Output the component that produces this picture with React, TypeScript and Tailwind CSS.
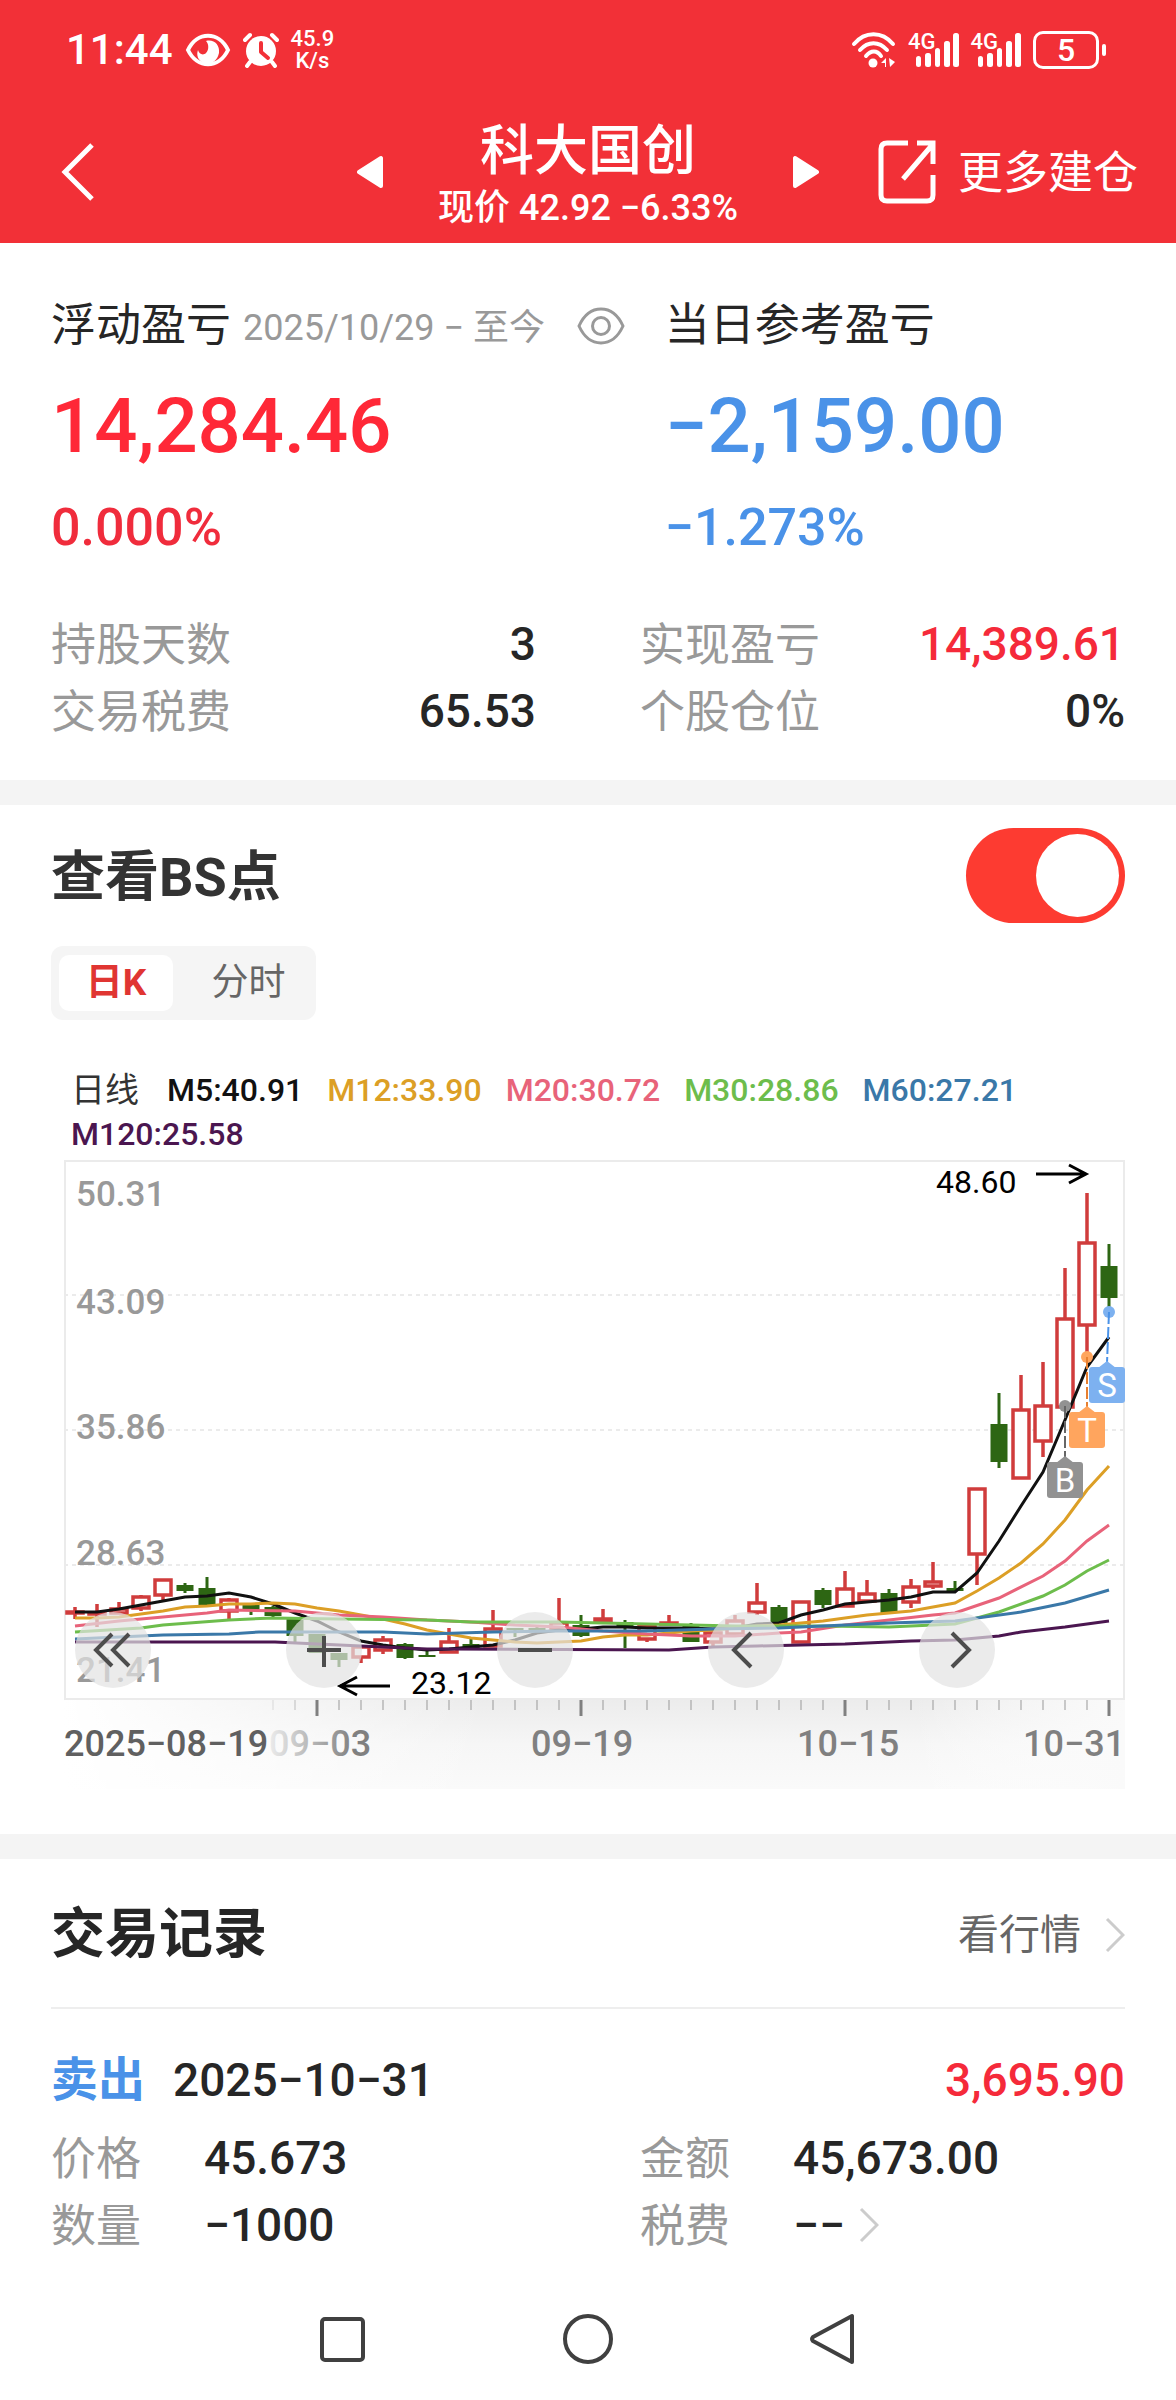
import { useState } from "react";

// [body top, body bottom, wick top, wick bottom, is rising]
type Candle = [number, number, number, number, boolean];

const candles: Candle[] = [
  [451, 454, 447, 459, true],
  [452, 455, 444, 467, true],
  [448, 454, 442, 454, true],
  [436, 449, 435, 451, true],
  [419, 436, 419, 440, true],
  [425, 431, 423, 433, false],
  [428, 445, 417, 445, false],
  [439, 452, 438, 459, true],
  [443, 450, 443, 455, false],
  [447, 456, 446, 457, false],
  [457, 476, 457, 482, false],
  [474, 493, 474, 493, false],
  [493, 500, 493, 507, false],
  [486, 498, 486, 503, true],
  [479, 491, 476, 494, true],
  [484, 498, 483, 499, false],
  [495, 497, 491, 497, false],
  [481, 493, 468, 493, true],
  [484, 488, 479, 488, false],
  [468, 487, 450, 487, true],
  [468, 470, 468, 477, false],
  [468, 471, 466, 471, false],
  [462, 469, 438, 469, true],
  [465, 476, 455, 477, false],
  [458, 462, 449, 462, true],
  [462, 468, 460, 488, false],
  [465, 480, 465, 482, true],
  [462, 465, 455, 465, true],
  [465, 482, 463, 482, false],
  [472, 483, 472, 486, true],
  [460, 475, 455, 477, true],
  [442, 453, 423, 455, true],
  [447, 463, 445, 463, false],
  [441, 483, 441, 483, true],
  [430, 445, 428, 448, false],
  [428, 447, 411, 447, true],
  [433, 442, 420, 442, true],
  [433, 453, 429, 453, false],
  [426, 443, 419, 448, true],
  [421, 427, 402, 429, true],
  [428, 431, 421, 431, false],
  [328, 395, 328, 425, true],
  [264, 302, 233, 308, false],
  [249, 319, 215, 319, true],
  [245, 282, 202, 297, true],
  [158, 248, 108, 248, true],
  [82, 166, 33, 197, true],
  [106, 138, 84, 151, false],
];

const averages = [
  {
    color: "#111111",
    points:
      "11,452 33,452 55,449 77,445 99,441 121,437 143,436 165,433 187,437 209,444 231,453 253,461 275,472 297,481 319,485 341,488 363,490 385,489 407,487 429,485 451,480 473,473 495,470 517,469 539,467 561,467 583,468 605,468 627,468 649,469 671,468 693,464 715,463 737,455 759,450 781,444 803,442 825,440 847,437 869,432 891,432 913,413 935,381 957,346 979,312 1001,260 1023,207 1045,177",
  },
  {
    color: "#dc9f26",
    points:
      "11,458 33,458 55,457 77,454 99,451 121,447 143,446 165,444 187,444 209,443 231,444 253,448 275,451 297,455 319,459 341,464 363,470 385,474 407,478 429,480 451,482 473,483 495,482 517,481 539,477 561,475 583,475 605,473 627,471 649,470 671,468 693,466 715,465 737,463 759,461 781,458 803,455 825,453 847,451 869,447 891,443 913,431 935,418 957,403 979,384 1001,360 1023,330 1045,306",
  },
  {
    color: "#e8637a",
    points:
      "11,466 55,461 99,457 143,453 165,450 231,451 275,455 319,457 363,460 407,462 451,465 495,467 539,471 583,474 627,476 671,476 715,473 737,472 781,465 825,460 869,455 891,453 935,438 979,416 1001,401 1023,381 1045,365",
  },
  {
    color: "#6dbd4c",
    points:
      "11,472 77,468 99,465 165,460 209,458 275,459 363,460 407,462 495,462 539,463 583,464 671,466 715,466 759,466 825,467 891,464 935,452 979,436 1001,425 1023,411 1045,400",
  },
  {
    color: "#3a78a8",
    points:
      "11,479 99,475 165,474 195,472 319,472 363,474 429,472 495,471 583,471 649,469 715,468 781,465 825,463 891,461 957,452 1001,443 1045,430",
  },
  {
    color: "#4b1650",
    points:
      "11,482 211,482 297,486 363,489 385,489 605,490 649,487 693,486 737,485 781,484 847,481 891,480 935,476 957,472 1001,467 1023,464 1045,461",
  },
];

const legend = [
  { text: "M5:40.91", color: "text-[#111111]" },
  { text: "M12:33.90", color: "text-[#dc9f26]" },
  { text: "M20:30.72", color: "text-[#e8637a]" },
  { text: "M30:28.86", color: "text-[#6dbd4c]" },
  { text: "M60:27.21", color: "text-[#3a78a8]" },
  { text: "M120:25.58", color: "text-[#4b1650]" },
];

const priceLabels = [
  { text: "50.31", y: 46 },
  { text: "43.09", y: 154 },
  { text: "35.86", y: 279 },
  { text: "28.63", y: 405 },
  { text: "21.41", y: 522 },
];

const dateLabels = [
  { text: "2025−08−19", x: 0, fill: "#606060" },
  { text: "09−03", x: 205, fill: "url(#labelFade)" },
  { text: "09−19", x: 467, fill: "#808080" },
  { text: "10−15", x: 733, fill: "#808080" },
  { text: "10−31", x: 959, fill: "#808080" },
];

const markers = [
  { letter: "B", color: "#929292", line: "#666666", x: 1001, dot: 246, box: 302, boxX: 1001 },
  { letter: "T", color: "#ffa55e", line: "#e88030", x: 1023, dot: 197, box: 252, boxX: 1023 },
  { letter: "S", color: "#7db1f0", line: "#4a92e8", x: 1045, dot: 152, box: 207, boxX: 1043 },
];

const chartButtons = [
  { label: "最早", path: "M37 22 L21 38 L37 54 M54 22 L38 38 L54 54" },
  { label: "放大", path: "M21 38 H55 M38 24 V55" },
  { label: "缩小", path: "M21 38 H55" },
  { label: "向左", path: "M43 21 L26 38 L43 55" },
  { label: "向右", path: "M33 21 L50 38 L33 55" },
];

function Signal() {
  return (
    <div className="flex items-end">
      <span className="self-start text-[22px] leading-[18px] font-medium">4G</span>
      <svg width="44" height="34" viewBox="0 0 44 34" className="-ml-5" fill="white">
        <rect x="0" y="23" width="5" height="11" rx="2.5" />
        <rect x="9" y="20" width="6" height="14" rx="2.5" />
        <rect x="19" y="15" width="5" height="19" rx="2.5" />
        <rect x="28" y="8" width="6" height="26" rx="2.5" />
        <rect x="37" y="0" width="6" height="34" rx="2.5" />
      </svg>
    </div>
  );
}

function StatusBar() {
  return (
    <div className="flex h-[100px] items-center justify-between pr-[70px] pl-[66px]">
      <div className="flex items-center gap-3">
        <span className="text-[42px] leading-[48px] font-medium">11:44</span>
        <svg width="46" height="36" viewBox="0 0 46 36" fill="none">
          <path d="M3 18 C12 -1 34 -1 43 18 C34 37 12 37 3 18 Z" stroke="white" strokeWidth="4" />
          <path d="M21 9 C29 7 35 13 34 21 C32 30 25 33 19 31 C13 29 11 23 13 18 C14 22 18 24 21 21 C24 18 24 12 21 9 Z" fill="white" />
        </svg>
        <svg width="36" height="36" viewBox="0 0 36 36" fill="none">
          <circle cx="18" cy="19" r="15" fill="white" />
          <path d="M2 8 L7 3 M34 8 L29 3" stroke="white" strokeWidth="4" strokeLinecap="round" />
          <path d="M7 30 L4 34 M29 30 L32 34" stroke="white" strokeWidth="4" strokeLinecap="round" />
          <path d="M18 11 V20 L25 26" stroke="#f23037" strokeWidth="4" strokeLinecap="round" strokeLinejoin="round" />
        </svg>
        <div className="text-center text-[22px] leading-[22px] font-medium">
          <div>45.9</div>
          <div>K/s</div>
        </div>
      </div>

      <div className="flex items-center gap-[11px]">
        <svg width="46" height="36" viewBox="0 0 46 36" fill="none" stroke="white" strokeWidth="4" strokeLinecap="round">
          <path d="M3 12 C14 -1 31 -1 42 12" />
          <path d="M9 18 C17 9 28 9 36 18" />
          <path d="M15 24 C20 18 26 18 30 24" />
          <circle cx="22" cy="31" r="4.5" fill="white" stroke="none" />
          <path d="M30 31 L35 26 V35 H34 V31 Z M38 26 L44 30 L39 35 Z" fill="white" stroke="none" />
        </svg>
        <Signal />
        <Signal />
        <div className="flex items-center gap-[3px]">
          <div className="flex h-[38px] w-[66px] items-center justify-center rounded-[10px] border-3 border-white text-[32px] leading-[32px] font-medium">
            5
          </div>
          <div className="h-3 w-1 rounded bg-white" />
        </div>
      </div>
    </div>
  );
}

function TitleBar() {
  return (
    <div className="grid h-[143px] grid-cols-[1fr_auto_1fr] items-center px-[38px]">
      <button aria-label="返回" className="ml-5 justify-self-start">
        <svg width="38" height="64" viewBox="0 0 38 64" fill="none" stroke="white" strokeWidth="5">
          <path d="M34 5 L7 32 L34 59" />
        </svg>
      </button>

      <div className="flex items-center gap-[55px]">
        <button aria-label="上一只">
          <svg width="26" height="36" viewBox="0 0 26 36" fill="white" stroke="white" strokeWidth="4" strokeLinejoin="round">
            <path d="M24 4 V32 L2 18 Z" />
          </svg>
        </button>
        <div className="pt-3 text-center">
          <h1 className="text-[54px] leading-[60px] font-medium">科大国创</h1>
          <p className="text-[36px] leading-[52px] font-medium">现价 42.92 −6.33%</p>
        </div>
        <button aria-label="下一只">
          <svg width="26" height="36" viewBox="0 0 26 36" fill="white" stroke="white" strokeWidth="4" strokeLinejoin="round">
            <path d="M2 4 V32 L24 18 Z" />
          </svg>
        </button>
      </div>

      <button className="flex items-center gap-[22px] justify-self-end text-[45px] leading-[60px]">
        <svg width="58" height="66" viewBox="0 0 58 66" fill="none" stroke="white" strokeWidth="5">
          <path d="M30 4 H9 Q3 4 3 10 V56 Q3 62 9 62 H49 Q55 62 55 56 V36" />
          <path d="M39 4 H55 V25 M55 5 L25 40" />
        </svg>
        <span className="pt-1">更多建仓</span>
      </button>
    </div>
  );
}

function Stat({ label, value, color }: { label: string; value: string; color: string }) {
  return (
    <div className="flex h-[67px] items-center justify-between leading-[60px]">
      <dt className="text-[45px] text-[#999999]">{label}</dt>
      <dd className={`pb-1 text-[46px] font-medium ${color}`}>{value}</dd>
    </div>
  );
}

function Summary() {
  return (
    <section className="px-[51px] pt-[51px] pb-[34px]">
      <div className="grid grid-cols-[4fr_3fr]">
        <div>
          <div className="flex items-center text-[#262626]">
            <h2 className="text-[45px] leading-[64px]">浮动盈亏</h2>
            <span className="ml-3 pt-1 text-[36px] leading-[60px] text-[#999999]">2025/10/29 − 至今</span>
            <button aria-label="隐藏金额" className="ml-8">
              <svg width="48" height="38" viewBox="0 0 48 38" fill="none" stroke="#999999" strokeWidth="3">
                <path d="M2 19 C7 8 15 2 24 2 C33 2 41 8 46 19 C41 30 33 36 24 36 C15 36 7 30 2 19 Z" />
                <circle cx="24" cy="19" r="8.5" />
              </svg>
            </button>
          </div>
          <p className="mt-5 text-[76px] leading-[96px] font-medium text-[#ff2837]">14,284.46</p>
          <p className="mt-[14px] text-[52px] leading-[80px] font-medium text-[#f02c3c]">0.000%</p>
        </div>
        <div>
          <h2 className="text-[45px] leading-[64px] text-[#262626]">当日参考盈亏</h2>
          <p className="mt-5 text-[76px] leading-[96px] font-medium text-[#4a92e8]">−2,159.00</p>
          <p className="mt-[14px] text-[52px] leading-[80px] font-medium text-[#4a92e8]">−1.273%</p>
        </div>
      </div>

      <dl className="mt-11 grid grid-cols-2 gap-x-[104px]">
        <Stat label="持股天数" value="3" color="text-[#262626]" />
        <Stat label="实现盈亏" value="14,389.61" color="text-[#f52a3a]" />
        <Stat label="交易税费" value="65.53" color="text-[#262626]" />
        <Stat label="个股仓位" value="0%" color="text-[#262626]" />
      </dl>
    </section>
  );
}

function Chart() {
  return (
    <div className="relative pl-[13px]">
      <svg viewBox="0 0 1061 630" className="block w-full" fontFamily="Roboto, sans-serif">
        <defs>
          <linearGradient id="axisShade" x1="0" y1="0" x2="0" y2="1">
            <stop offset="0" stopColor="#ececec" />
            <stop offset="0.5" stopColor="#f6f6f6" />
            <stop offset="1" stopColor="#fafafa" />
          </linearGradient>
          <linearGradient id="axisFade" x1="0" y1="0" x2="1" y2="0">
            <stop offset="0" stopColor="white" />
            <stop offset="0.4" stopColor="white" stopOpacity="0" />
            <stop offset="0.8" stopColor="white" stopOpacity="0" />
            <stop offset="1" stopColor="#fafafa" stopOpacity="1" />
          </linearGradient>
          <linearGradient id="labelFade" gradientUnits="userSpaceOnUse" x1="200" y1="0" x2="290" y2="0">
            <stop offset="0" stopColor="#f2f2f2" />
            <stop offset="1" stopColor="#808080" />
          </linearGradient>
        </defs>

        <rect x="1" y="1" width="1059" height="538" fill="none" stroke="#ebebeb" strokeWidth="2" />
        {[135, 270, 405].map((y) => (
          <line key={y} x1="0" x2="1061" y1={y} y2={y} stroke="#ebebeb" strokeWidth="2" strokeDasharray="4 4" />
        ))}
        {priceLabels.map((label) => (
          <text key={label.text} x="12" y={label.y} fontSize="35" fontWeight="500" fill="#999999">
            {label.text}
          </text>
        ))}

        {/* date axis */}
        <rect x="0" y="540" width="1061" height="89" fill="url(#axisShade)" />
        <rect x="0" y="540" width="1061" height="89" fill="url(#axisFade)" />
        {Array.from({ length: 39 }, (_, i) => {
          const major = i % 12 === 2;
          return (
            <line
              key={i}
              x1={209 + i * 22}
              x2={209 + i * 22}
              y1="540"
              y2={major ? 556 : 550}
              stroke={major ? "#808080" : "#999999"}
              strokeWidth={major ? 3 : 1}
              opacity={i < 2 ? 0.3 + i * 0.3 : 1}
            />
          );
        })}
        {dateLabels.map((label) => (
          <text key={label.text} x={label.x} y="596" fontSize="36" fontWeight="500" fill={label.fill}>
            {label.text}
          </text>
        ))}

        {candles.map(([top, bottom, high, low, rising], i) => {
          const x = 11 + i * 22;
          if (!rising) {
            return (
              <g key={i} fill="#2d6613">
                <rect x={x - 1.5} y={high} width="3" height={low - high} />
                <rect x={x - 8.5} y={top} width="17" height={bottom - top} />
              </g>
            );
          }
          return (
            <g key={i} stroke="#d03c3c" strokeWidth="3.5">
              <path d={`M${x} ${high} V${top} M${x} ${bottom} V${low}`} />
              <rect
                x={x - 8}
                y={top + 1}
                width="16"
                height={Math.max(bottom - top - 2, 1)}
                fill="white"
              />
            </g>
          );
        })}

        {averages.map((line) => (
          <polyline key={line.color} points={line.points} fill="none" stroke={line.color} strokeWidth="3" />
        ))}

        {markers.map((m) => (
          <g key={m.letter}>
            <circle cx={m.x} cy={m.dot} r="6" fill={m.color} />
            <line x1={m.x} y1={m.dot} x2={m.boxX} y2={m.box - 4} stroke={m.line} strokeWidth="2" strokeDasharray="12 3" />
            <path d={`M${m.boxX - 9} ${m.box + 1} L${m.boxX} ${m.box - 6} L${m.boxX + 9} ${m.box + 1} Z`} fill={m.color} />
            <rect x={m.boxX - 18} y={m.box} width="36" height="36" rx="3" fill={m.color} />
            <text x={m.boxX} y={m.box + 30} fontSize="33" fill="white" textAnchor="middle">
              {m.letter}
            </text>
          </g>
        ))}

        <g stroke="black" strokeWidth="3" fill="none">
          <path d="M972 14 H1022 M1005 5 L1022 14 L1005 23" />
          <path d="M326 526 H276 M293 517 L276 526 L293 535" />
        </g>
        <text x="872" y="33" fontSize="32" fill="black">
          48.60
        </text>
        <text x="347" y="534" fontSize="32" fill="black">
          23.12
        </text>
      </svg>

      {/* zoom and pan buttons float over the candles */}
      <div className="absolute inset-x-0 top-[452px] flex justify-between pr-[130px] pl-6">
        {chartButtons.map((button) => (
          <button key={button.label} aria-label={button.label} className="size-19 rounded-full bg-[#e2e2e2]/70">
            <svg viewBox="0 0 76 76" fill="none" stroke="#4d4d4d" strokeWidth="4">
              <path d={button.path} />
            </svg>
          </button>
        ))}
      </div>
    </div>
  );
}

function BsPoints() {
  const [enabled, setEnabled] = useState(true);
  const [tab, setTab] = useState("day");

  return (
    <section className="px-[51px] pt-[23px] pb-11">
      <div className="flex items-center justify-between">
        <h2 id="bs-title" className="pt-1 text-[54px] leading-[90px] font-bold text-[#333333]">
          查看BS点
        </h2>
        <button
          role="switch"
          aria-checked={enabled}
          aria-labelledby="bs-title"
          onClick={() => setEnabled(!enabled)}
          className={`flex h-[95px] w-[159px] items-center rounded-full px-[6px] ${
            enabled ? "justify-end bg-[#fd3b31]" : "justify-start bg-gray-300"
          }`}
        >
          <span className="size-[83px] rounded-full bg-white" />
        </button>
      </div>

      <div className="mt-[23px] flex w-fit rounded-xl bg-[#f5f5f5] px-2 py-[9px] text-[37px] leading-[56px]">
        <button
          onClick={() => setTab("day")}
          className={`w-[114px] rounded-[10px] ${tab === "day" ? "bg-white font-bold text-[#e03532]" : "text-[#666666]"}`}
        >
          日K
        </button>
        <button
          onClick={() => setTab("minute")}
          className={`ml-4 w-[119px] rounded-[10px] ${tab === "minute" ? "bg-white font-bold text-[#e03532]" : "text-[#666666]"}`}
        >
          分时
        </button>
      </div>

      <div className="mt-12 mb-1 flex flex-wrap gap-x-6 pr-16 pl-5 text-[32px] leading-[44px] font-medium">
        <span className="pr-1 text-[34px] font-normal text-[#333333]">日线</span>
        {legend.map((item) => (
          <span key={item.text} className={item.color}>
            {item.text}
          </span>
        ))}
      </div>
      <Chart />
    </section>
  );
}

function Chevron() {
  return (
    <svg width="20" height="36" viewBox="0 0 20 36" fill="none" stroke="#cccccc" strokeWidth="3">
      <path d="M2 2 L18 18 L2 34" />
    </svg>
  );
}

function Detail({ label, value, arrow }: { label: string; value: string; arrow?: boolean }) {
  return (
    <div className="flex h-[67px] items-center leading-[60px]">
      <dt className="w-[153px] text-[45px] text-[#999999]">{label}</dt>
      <dd className="flex items-center gap-[14px] pb-1 text-[46px] font-medium text-[#262626]">
        {value}
        {arrow && <Chevron />}
      </dd>
    </div>
  );
}

function Records() {
  return (
    <section className="px-[51px] pt-10">
      <div className="flex items-center justify-between border-b-2 border-[#eeeeee] pb-9">
        <h2 className="text-[54px] leading-[72px] font-bold text-[#262626]">交易记录</h2>
        <a href="#quote" className="flex items-center gap-6 text-[41px] leading-[72px] text-[#666666]">
          看行情
          <Chevron />
        </a>
      </div>

      <div className="flex items-center pt-[33px] text-[46px] leading-[76px] font-medium">
        <span className="text-[47px] font-bold text-[#4a92e8]">卖出</span>
        <span className="ml-7 text-[#262626]">2025−10−31</span>
        <span className="ml-auto text-[#f52a3a]">3,695.90</span>
      </div>
      <dl className="mt-2 grid grid-cols-2 gap-x-[104px]">
        <Detail label="价格" value="45.673" />
        <Detail label="金额" value="45,673.00" />
        <Detail label="数量" value="−1000" />
        <Detail label="税费" value="−−" arrow />
      </dl>
    </section>
  );
}

function SystemNav() {
  return (
    <nav className="mt-[51px] flex justify-center gap-[190px] pb-6">
      <button aria-label="最近任务">
        <svg width="56" height="56" viewBox="0 0 56 56" fill="none" stroke="#404040" strokeWidth="4">
          <rect x="8" y="8" width="41" height="41" rx="3" />
        </svg>
      </button>
      <button aria-label="主屏幕">
        <svg width="56" height="56" viewBox="0 0 56 56" fill="none" stroke="#404040" strokeWidth="4">
          <circle cx="28" cy="28" r="23" />
        </svg>
      </button>
      <button aria-label="后退">
        <svg width="56" height="56" viewBox="0 0 56 56" fill="none" stroke="#404040" strokeWidth="4" strokeLinejoin="round">
          <path d="M46 5 V51 L7 30 Q5 28 7 26 Z" />
        </svg>
      </button>
    </nav>
  );
}

export default function App() {
  return (
    <div className="min-h-screen bg-white font-[Roboto,'Noto_Sans_CJK_SC',sans-serif]">
      <header className="bg-[#f23037] text-white">
        <StatusBar />
        <TitleBar />
      </header>
      <main>
        <Summary />
        <div className="h-[25px] bg-[#f4f4f4]" />
        <BsPoints />
        <div className="h-[25px] bg-[#f4f4f4]" />
        <Records />
      </main>
      <SystemNav />
    </div>
  );
}
